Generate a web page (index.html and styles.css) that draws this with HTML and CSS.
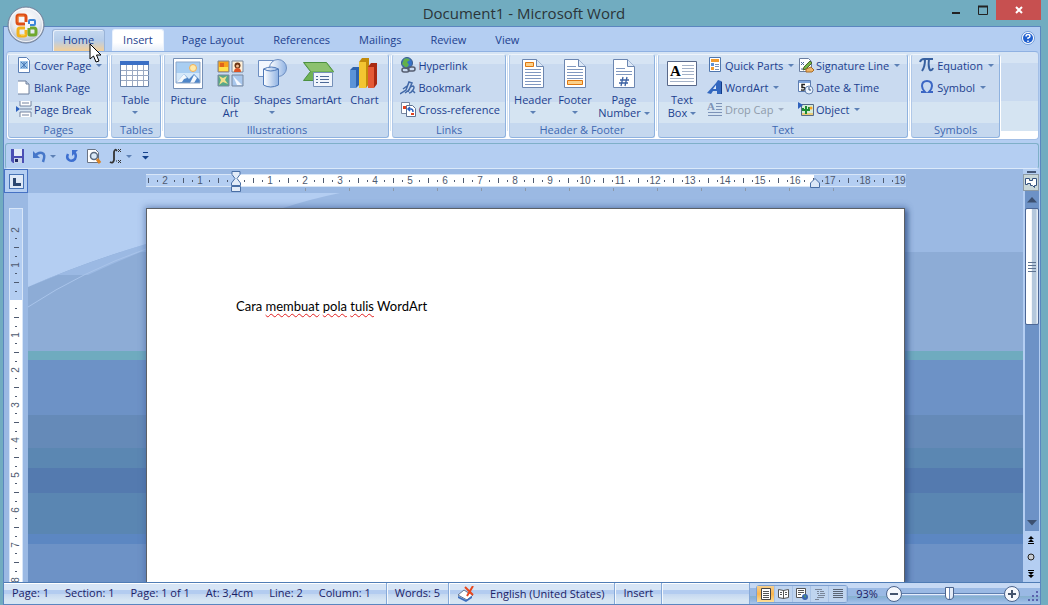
FILE: index.html
```html
<!DOCTYPE html>
<html lang="en">
<head>
    <meta charset="UTF-8">
    <meta name="viewport" content="width=device-width, initial-scale=1.0">
    <title>Document1 - Microsoft Word</title>
    <link rel="stylesheet" href="styles.css">
</head>
<body>

    <header class="titlebar">
        <h1>Document1 - Microsoft Word</h1>
        <div class="window-buttons">
            <button class="win-btn" aria-label="Minimize"><svg width="10" height="10"><path d="M1 8h8" stroke="#222" stroke-width="2"/></svg></button>
            <button class="win-btn" aria-label="Maximize"><svg width="10" height="10"><path d="M.5 1v8.500h9V1" fill="none" stroke="#222"/><path d="M0 1.500h10" stroke="#222" stroke-width="2"/></svg></button>
            <button class="win-btn close" aria-label="Close"><svg width="8" height="8"><path d="M1 1l6 6M7 1l-6 6" stroke="#fff" stroke-width="2"/></svg></button>
        </div>
    </header>

    <button class="orb" aria-label="Office Button">
        <svg width="38" height="38" viewBox="0 0 38 38">
            <defs><radialGradient id="orbFill" cx=".5" cy=".35" r=".65"><stop offset="0" stop-color="#fff"/><stop offset=".6" stop-color="#e6eaf1"/><stop offset="1" stop-color="#a9b4c6"/></radialGradient></defs>
            <circle cx="19" cy="19" r="18" fill="url(#orbFill)" stroke="#71809a"/>
            <circle cx="19" cy="19" r="16.500" fill="none" stroke="#fff" opacity=".8"/>
            <g fill="none" stroke-linejoin="round">
                <path d="M18 18h-6q-2 0-2-2v-5q0-2 2-2h5q2 0 2 2v5" stroke="#dd4f17" stroke-width="3"/>
                <path d="M11 16v-5q0-1 1-1h5" stroke="#f58a3c"/>
                <path d="M22 18v-3q0-1 1-1h4q1 0 1 1v3q0 1-1 1h-4" stroke="#3d86d8" stroke-width="2"/>
                <path d="M18 22h-5q-2 0-2 2v4q0 2 2 2h4q2 0 2-2v-4" stroke="#f3b21b" stroke-width="3"/>
                <path d="M14 29h3q1 0 1-1" stroke="#ffdf6a"/>
                <path d="M22 22v6q0 1 1 1h4q2 0 2-2v-3q0-2-2-2h-4" stroke="#6fa82e" stroke-width="3"/>
            </g>
        </svg>
    </button>

    <div class="app">
        <nav class="tabs">
            <button class="tab hover">Home</button>
            <button class="tab active">Insert</button>
            <button class="tab">Page Layout</button>
            <button class="tab">References</button>
            <button class="tab">Mailings</button>
            <button class="tab">Review</button>
            <button class="tab">View</button>
            <button class="help" aria-label="Help"><svg width="14" height="14"><circle cx="7" cy="7" r="6.500" fill="#fff" stroke="#6f9bd8"/><circle cx="7" cy="7" r="5" fill="#1f5fcf"/><path d="M5 5.500q0-2 2-2t2 1.700q0 1.300-2 1.800v1M7 9.500v1.500" fill="none" stroke="#fff" stroke-width="1.500"/></svg></button>
        </nav>

        <div class="ribbon">
            <section class="group">
                <div class="group-body">
                    <div class="small-list pad-pages">
                        <button class="small"><svg width="16" height="16"><path d="M2.500.5h8l3 3v12h-11z" fill="#fff" stroke="#5b7fb5"/><path d="M4 4h8v8H4z" fill="#9cc4ea"/><path d="M5 5l6 6M11 5l-6 6M8 5v6" stroke="#4a7bb8"/></svg>Cover Page<i class="arrow"></i></button>
                        <button class="small"><svg width="16" height="16"><path d="M2 2h8l3 3v10H2z" fill="#fff"/><path d="M2 2h8l3 3v10H2" fill="none" stroke="#6c7f9c"/><path d="M10 2v3h3" fill="#c6d5ea" stroke="#6c7f9c"/></svg>Blank Page</button>
                        <button class="small"><svg width="16" height="16"><path d="M0 5l4 3-4 3z" fill="#2f62bd"/><path d="M4 0h11v5H4zM4 11h11v5H4z" fill="#fff"/><path d="M4 0v5h11V0M4 16v-5h11v5M6 2h7M6 14h7M4 8h12" fill="none" stroke="#7283a0"/></svg>Page Break</button>
                    </div>
                </div>
                <h2>Pages</h2>
            </section>

            <section class="group">
                <div class="group-body">
                    <div class="big-list big-table">
                        <button class="big"><svg width="32" height="32"><path d="M1.500 3.500h28v25h-28z" fill="#fff" stroke="#6a84ab"/><path d="M1 3h29v4H1z" fill="#3a6fc5"/><path d="M2 12.500h28M2 17.500h28M2 22.500h28M7.500 7v21M13.500 7v21M18.500 7v21M24.500 7v21" stroke="#9aa9c2"/></svg>Table<i class="arrow"></i></button>
                    </div>
                </div>
                <h2>Tables</h2>
            </section>

            <section class="group">
                <div class="group-body">
                    <div class="big-list big-illustrations">
                        <button class="big"><svg width="32" height="32"><path d="M1.500.5h29v30h-29z" fill="#fff" stroke="#7690b6"/><path d="M4 4h24v21H4z" fill="#a9cef2"/><path d="M4 15h24v8H4z" fill="#d4e8fa"/><circle cx="21" cy="10" r="3.500" fill="#ffe9a8" stroke="#eeb05a"/><path d="M4 25l8-9 5 5 5-5 6 6v3z" fill="#4f86c8"/><path d="M4 25l8-9 3 4-3 1-2 3zM18 25l4-8 3 3-3 5z" fill="#f3f8fd"/><path d="M4 4h24v21H4z" fill="none" stroke="#8da7ca"/></svg>Picture</button>
                        <button class="big"><svg width="32" height="32"><path d="M4 3h11v11H4z" fill="#f7a11b" stroke="#78879d"/><path d="M5 9h9v4H5z" fill="#ffe14a"/><path d="M6 5h4v4H6z" fill="#e0641a"/><path d="M18 3h11v11H18z" fill="#fff0d8" stroke="#78879d"/><circle cx="23.500" cy="7.500" r="3" fill="#6b3312"/><circle cx="23.500" cy="8" r="1.500" fill="#f1b98d"/><path d="M20 14q0-4 3.500-4t3.500 4z" fill="#dd5426"/><path d="M4 17h11v11H4z" fill="#58a988" stroke="#78879d"/><path d="M5 18l4 2 4-2-2 4 3 4-5-2-4 3 2-5z" fill="#f1e08a"/><path d="M18 17h11v11H18z" fill="#a9c7ed" stroke="#78879d"/><path d="M19 18l9 9h-5z" fill="#f4f8fe"/></svg>Clip<br>Art</button>
                        <button class="big"><svg width="32" height="32"><defs><linearGradient id="shapeFill"><stop offset="0" stop-color="#fff"/><stop offset="1" stop-color="#8fb2e3"/></linearGradient></defs><path d="M2.500 2.500h17v16h-17z" fill="#f2f7fe" stroke="#6e8fc2"/><circle cx="22" cy="10" r="8.500" fill="url(#shapeFill)" stroke="#6e8fc2"/><path d="M7.500 11v16q7 4 15 0V11q-7-4-15 0q7 4 15 0" fill="url(#shapeFill)" stroke="#4f79b8"/></svg>Shapes<i class="arrow"></i></button>
                        <button class="big"><svg width="32" height="32"><path d="M1.500 4.500h23l7 9-7 9h-23l7-9z" fill="#6fb255" stroke="#4b9040"/><path d="M3 5h21l6 8H9z" fill="#8cc16f"/><path d="M11.500 14.500h19v14h-19z" fill="#f0f5fc" stroke="#7590b8"/><path d="M14 18.500h2M14 21.500h2M14 24.500h2M18 18.500h9M18 21.500h9M18 24.500h9" stroke="#4c6997"/></svg>SmartArt</button>
                        <button class="big"><svg width="32" height="32"><path d="M2 12l3-3h6v18l-3 3H2z" fill="#2e62ad"/><path d="M2 12h6v18H2z" fill="#5b93d8"/><path d="M11 4l3-4h7v26l-3 4h-7z" fill="#c38b0b"/><path d="M11 4h7v26h-7z" fill="#f3c531"/><path d="M20 9l3-4h6v21l-3 4h-6z" fill="#a92a12"/><path d="M20 9h6v21h-6z" fill="#e55a35"/></svg>Chart</button>
                    </div>
                </div>
                <h2>Illustrations</h2>
            </section>

            <section class="group">
                <div class="group-body">
                    <div class="small-list pad-links">
                        <button class="small"><svg width="16" height="16"><circle cx="7" cy="6" r="5.500" fill="#3571c8" stroke="#3a5c8c"/><path d="M4 2q4-2 6 1l-3 2 2 3-3 3-4-4z" fill="#63b04a"/><rect x="2" y="11" width="7" height="4" rx="2" fill="none" stroke="#555e70" stroke-width="1.500"/><rect x="8" y="10" width="7" height="4" rx="2" fill="none" stroke="#555e70" stroke-width="1.500"/></svg>Hyperlink</button>
                        <button class="small"><svg width="16" height="16"><path d="M0 15l6-4 3-8 3 1-3 7-4 3M3 10l4-3M8 13q2-6 5-6 2 1 0 4-2 3-4 3M13 12l2 2" fill="none" stroke="#4269a8" stroke-width="1.500"/></svg>Bookmark</button>
                        <button class="small"><svg width="16" height="16"><path d="M1.500 1.500h8v11h-8z" fill="#fff" stroke="#7786a0"/><path d="M3 5h3v3H3z" fill="#e3421e"/><path d="M6.500 4.500h6l3 3v8h-9z" fill="#fff" stroke="#5f7292"/><path d="M8 8h3q2 0 2 3M10 6L8 8l2 2" fill="none" stroke="#2e5fbb" stroke-width="1.500"/><path d="M11 12h3v2h-3z" fill="#e3421e"/></svg>Cross-reference</button>
                    </div>
                </div>
                <h2>Links</h2>
            </section>

            <section class="group">
                <div class="group-body">
                    <div class="big-list big-header">
                        <button class="big"><svg width="32" height="32"><path d="M5.500 1.500h14l7 7v21h-21z" fill="#fff" stroke="#6c86b0"/><path d="M19.500 1.500v7h7" fill="#dce8f7" stroke="#6c86b0"/><path d="M8 11.500h16M8 14.500h16M8 17.500h16M8 20.500h16M8 23.500h16M8 26.500h16" stroke="#8098c0"/><path d="M8.500 4.500h8v4h-8z" fill="#fbd08a" stroke="#e0770f"/></svg>Header<i class="arrow"></i></button>
                        <button class="big"><svg width="32" height="32"><path d="M5.500 1.500h14l7 7v21h-21z" fill="#fff" stroke="#6c86b0"/><path d="M19.500 1.500v7h7" fill="#dce8f7" stroke="#6c86b0"/><path d="M8 8.500h9M8 11.500h16M8 14.500h16M8 17.500h16M8 20.500h16" stroke="#8098c0"/><path d="M8.500 22.500h15v4h-15z" fill="#fbd08a" stroke="#e0770f"/></svg>Footer<i class="arrow"></i></button>
                        <button class="big"><svg width="32" height="32"><path d="M5.500 1.500h14l7 7v21h-21z" fill="#fff" stroke="#6c86b0"/><path d="M19.500 1.500v7h7" fill="#dce8f7" stroke="#6c86b0"/><path d="M8 10.500h9M8 13.500h16M8 16.500h16" stroke="#8098c0"/><path d="M15 19l-2 9M19 19l-2 9M12 22h9M11 25h9" stroke="#3c62a4" stroke-width="1.300"/></svg>Page<span>Number<i class="arrow"></i></span></button>
                    </div>
                </div>
                <h2>Header &amp; Footer</h2>
            </section>

            <section class="group">
                <div class="group-body">
                    <div class="big-list big-text">
                        <button class="big"><svg width="32" height="32"><path d="M1.500 3.500h29v24h-29z" fill="#fff" stroke="#59698a"/><text x="4" y="18" class="serif-a" font-size="15">A</text><path d="M16 7.500h12M16 10.500h12M16 13.500h12M16 16.500h12M4 20.500h24M4 23.500h24" stroke="#a4b2c8"/></svg>Text<span>Box<i class="arrow"></i></span></button>
                    </div>
                    <div class="small-list pad-quick">
                        <button class="small"><svg width="16" height="16"><path d="M2.500.5h11v14h-11z" fill="#fff" stroke="#4f76ad"/><path d="M4 2h8v3H4z" fill="#f29b2e"/><path d="M4 6h3v3H4z" fill="#5d8fd3"/><path d="M8 7.500h4M8 9.500h4M8 12.500h4" stroke="#7f93b5"/><path d="M4 10h3v3H4z" fill="#f29b2e"/></svg>Quick Parts<i class="arrow"></i></button>
                        <button class="small"><svg width="16" height="16"><path d="M0 14l9-10 2-3 3 1v13h-4v-3H6l-2 3z" fill="#3267bf"/><path d="M9 6v4H6z" fill="#dce9fb"/><path d="M14 2l1 1v12h-1z" fill="#123a86"/></svg>WordArt<i class="arrow"></i></button>
                        <button class="small" disabled><svg width="16" height="16"><text x="0" y="9" class="serif-a grey" font-size="11">A</text><path d="M9 2.500h6M9 5.500h6M9 8.500h6M1 11.500h14M1 14.500h14" stroke="#7d93b8"/></svg>Drop Cap<i class="arrow"></i></button>
                    </div>
                    <div class="small-list">
                        <button class="small"><svg width="16" height="16"><path d="M1.500 1.500h9l3 3v10h-12z" fill="#fff" stroke="#697da0"/><path d="M3 5l3 3M6 5L3 8M3 12h6" stroke="#4b6797"/><path d="M6 10l6-6 2 2-6 6-3 1z" fill="#77b648" stroke="#4b642c"/><path d="M8 12l5-2 3 3-2 2H8z" fill="#eeb568" stroke="#a66b27"/></svg>Signature Line<i class="arrow"></i></button>
                        <button class="small"><svg width="16" height="16"><path d="M.5 1.500h12v11H.5z" fill="#fff" stroke="#5d7db1"/><path d="M1 2h11v2H1z" fill="#7fa5dc"/><path d="M7 5.500H4v3h2q1 0 1 1.500T3 11" fill="none" stroke="#222" stroke-width="1.500"/><circle cx="11" cy="11" r="4" fill="#e8f1fc" stroke="#6482af"/><path d="M11 8v3h2" fill="none" stroke="#35507f"/></svg>Date &amp; Time</button>
                        <button class="small"><svg width="16" height="16"><path d="M3.500 3.500h12v11h-12z" fill="#d6ecd8" stroke="#556a88"/><path d="M0 1l5 3-5 4z" fill="#2f62bd"/><path d="M4 12h11v2H4z" fill="#e8ca78"/><path d="M8 5v8M5 7v2h6V6" fill="none" stroke="#1d8a31" stroke-width="2"/><circle cx="13" cy="7" r="1.500" fill="#f5a623"/></svg>Object<i class="arrow"></i></button>
                    </div>
                </div>
                <h2>Text</h2>
            </section>

            <section class="group">
                <div class="group-body">
                    <div class="small-list pad-links">
                        <button class="small"><svg width="16" height="16"><path d="M1 5q1-3 4-3h9M6 2q0 8-3 12M10 2q-1 8 1 11 2 1 3-2" fill="none" stroke="#37609f" stroke-width="2"/></svg>Equation<i class="arrow"></i></button>
                        <button class="small"><svg width="16" height="16"><path d="M2 13h4q-3-3-3-6 0-5 5-5t5 5q0 3-3 6h4" fill="none" stroke="#3b66c4" stroke-width="2"/></svg>Symbol<i class="arrow"></i></button>
                    </div>
                </div>
                <h2>Symbols</h2>
            </section>
        </div>

        <div class="quickbar">
            <button aria-label="Save"><svg width="16" height="16"><path d="M1 1h13v14H3l-2-2z" fill="#4a4fb4"/><path d="M4 1h8v7H4z" fill="#e4ebf8"/><path d="M4 10h8v5H4z" fill="#c9d4ea"/><path d="M5 11h3v3H5z" fill="#222a66"/></svg></button>
            <button aria-label="Undo"><svg width="16" height="16"><path d="M3 8q3-4 7-3t1 9" fill="none" stroke="#4677c9" stroke-width="2.500"/><path d="M1 3v7h7z" fill="#4677c9"/></svg></button>
            <button class="drop" aria-label="Undo list"><i class="arrow"></i></button>
            <button aria-label="Repeat"><svg width="16" height="16"><path d="M4 6q-2 4 1 6 3 2 6-1 2-4-1-7" fill="none" stroke="#3d6fd0" stroke-width="2.500"/><path d="M8 2h6l-6 6z" fill="#3d6fd0"/></svg></button>
            <button aria-label="Print Preview"><svg width="16" height="16"><path d="M1.500 1.500h8l3 3v10h-11z" fill="#fff" stroke="#6b7484"/><circle cx="8" cy="8" r="3.500" fill="#dbeaf8" stroke="#5b6b80" stroke-width="1.500"/><path d="M11 11l3 4" stroke="#d98326" stroke-width="3"/></svg></button>
            <button aria-label="Equation"><svg width="16" height="16"><path d="M9 3Q7 0 6 4v8q-1 4-4 2" fill="none" stroke="#333" stroke-width="1.800"/><path d="M10 1l3 3M13 1l-3 3M10 12l3 3M13 12l-3 3M8 13h1" stroke="#333"/></svg></button>
            <button class="drop" aria-label="Equation list"><i class="arrow"></i></button>
            <button class="drop" aria-label="Customize Quick Access Toolbar"><svg width="7" height="8"><path d="M1 .5h5" stroke="#15428b"/><path d="M0 4h7L3.500 7.500z" fill="#15428b"/></svg></button>
        </div>

        <div class="editor">
            <div class="tab-corner"><button class="tab-kind" aria-label="Left Tab"><svg width="8" height="8"><path d="M1.500 0v6.500H8" fill="none" stroke="#2c4770" stroke-width="3"/></svg></button></div>

            <div class="ruler-row">
                <div class="ruler">
                    <div class="cm">2</div><div class="cm">1</div><div class="cm"></div><div class="cm">1</div><div class="cm">2</div><div class="cm">3</div><div class="cm">4</div><div class="cm">5</div><div class="cm">6</div><div class="cm">7</div><div class="cm">8</div><div class="cm">9</div><div class="cm">10</div><div class="cm">11</div><div class="cm">12</div><div class="cm">13</div><div class="cm">14</div><div class="cm">15</div><div class="cm">16</div><div class="cm">17</div><div class="cm">18</div><div class="cm">19</div>
                </div>
                <svg class="indent left" width="10" height="22"><path d="M1 .5h8v3L6 7.500 9.500 12v2.500H.5V12L4 7.500 1 3.500z" fill="#e3ecf8" stroke="#4a6fa5"/><path d="M.5 15.500h9v5h-9z" fill="#e3ecf8" stroke="#4a6fa5"/></svg>
                <svg class="indent right" width="10" height="10"><path d="M.5 9.500V5L5 .5 9.500 5v4.500z" fill="#dbe7f7" stroke="#4a6fa5"/></svg>
            </div>

            <div class="v-ruler-col">
                <div class="v-ruler">
                    <div class="vcm first"><span>2</span></div><div class="vcm"><span>1</span></div><div class="vcm"></div><div class="vcm"><span>1</span></div><div class="vcm"><span>2</span></div><div class="vcm"><span>3</span></div><div class="vcm"><span>4</span></div><div class="vcm"><span>5</span></div><div class="vcm"><span>6</span></div><div class="vcm"><span>7</span></div><div class="vcm"><span>8</span></div>
                </div>
            </div>

            <main class="workspace">
                <svg class="swoosh" width="480" height="120"><path d="M0 0h312q-30 6-60 16L115 52Q55 70 0 94z" fill="#b4cef2"/><path d="M0 94Q55 70 115 52l3-1v6Q90 68 60 82H30L0 94z" fill="#9bb9e3"/><path d="M0 114Q55 78 118 56" fill="none" stroke="#a9c4ea"/></svg>
                <article class="page">
                    <p>Cara <u>membuat</u> <u>pola</u> <u>tulis</u> WordArt</p>
                </article>
            </main>

            <aside class="scrollbar">
                <div class="split"></div>
                <button class="ruler-toggle" aria-label="View Ruler"><svg width="14" height="13"><path d="M1.500 2.500h4v2h3v-2h4v7h-2v2l-2-2h-2v-2h-3v1h-2z" fill="#fff" stroke="#34517f"/></svg></button>
                <div class="track">
                    <button class="step" aria-label="Scroll up"><svg width="10" height="6"><path d="M0 5.500L5 0l5 5.500z" fill="#3c5070"/></svg></button>
                    <div class="thumb"></div>
                    <button class="step last" aria-label="Scroll down"><svg width="10" height="6"><path d="M0 0l5 5.500L10 0z" fill="#3c5070"/></svg></button>
                </div>
                <button class="browse" aria-label="Previous Page"><svg width="8" height="8"><path d="M4 0l3 3H1zM4 3l3 3H1zM1 7h6v1H1z"/></svg></button>
                <button class="browse" aria-label="Select Browse Object"><svg width="8" height="8"><circle cx="4" cy="4" r="3" fill="#c9cdd2" stroke="#222"/></svg></button>
                <button class="browse" aria-label="Next Page"><svg width="8" height="8"><path d="M1 0h6v1H1zM1 2h6L4 5zM1 5h6L4 8z"/></svg></button>
            </aside>
        </div>

        <footer class="status">
            <div class="cell cell-pos"><span>Page: 1</span><span>Section: 1</span><span>Page: 1 of 1</span><span>At: 3,4cm</span><span>Line: 2</span><span>Column: 1</span></div>
            <div class="cell">Words: 5</div>
            <div class="cell cell-lang"><svg width="18" height="16"><path d="M1 9l6-5 3 2 6 3-6 5z" fill="#fff" stroke="#66758e"/><path d="M1 10l8 4 6-4v2l-6 4-8-4z" fill="#3e6fbe"/><path d="M8 1l8 8M16 0l-6 10" stroke="#e8481e" stroke-width="2"/></svg>English (United States)</div>
            <div class="cell">Insert</div>
            <div class="cell spacer"></div>
            <div class="status-right">
                <div class="views">
                    <button class="on" aria-label="Print Layout"><svg width="12" height="12"><path d="M1.500.5h9v11h-9z" fill="#fff" stroke="#444"/><path d="M3 3.500h6M3 5.500h6M3 7.500h6M3 9.500h6" stroke="#555"/></svg></button>
                    <button aria-label="Full Screen Reading"><svg width="12" height="12"><path d="M.5 1.500l5 1 5-1v8l-5 1-5-1z" fill="#fff" stroke="#555"/><path d="M5.500 2v9M2 4.500h2M2 6.500h2M7 4.500h2M7 6.500h2" stroke="#555"/></svg></button>
                    <button aria-label="Web Layout"><svg width="12" height="12"><path d="M.5.5h9v9h-9z" fill="#fff" stroke="#555"/><path d="M2 2.500h6M2 4.500h6M2 6.500h3" stroke="#555"/><circle cx="9" cy="9" r="3" fill="#3a66b0"/><path d="M8 7l2 1-1 2z" fill="#5fae4c"/></svg></button>
                    <button aria-label="Outline"><svg width="12" height="12"><path d="M1 1.500h7M3 3.500h2M6 3.500h4M3 5.500h2M6 5.500h5M4 7.500h7M3 9.500h7M1 11.500h4" stroke="#7a8699"/></svg></button>
                    <button aria-label="Draft"><svg width="12" height="12"><path d="M1 1.500h10M1 3.500h10M1 5.500h10M1 7.500h10M1 9.500h10" stroke="#5a6474"/></svg></button>
                </div>
                <button class="zoom-value">93%</button>
                <button class="zoom-btn" aria-label="Zoom Out"><svg width="16" height="16"><circle cx="8" cy="8" r="7.500" fill="#f4f7fc" stroke="#4c648c"/><path d="M4 8h8" stroke="#44546e" stroke-width="2"/></svg></button>
                <input class="zoom" type="range" min="0" max="100" value="46" aria-label="Zoom">
                <button class="zoom-btn" aria-label="Zoom In"><svg width="16" height="16"><circle cx="8" cy="8" r="7.500" fill="#f4f7fc" stroke="#4c648c"/><path d="M4 8h8M8 4v8" stroke="#44546e" stroke-width="2"/></svg></button>
                <svg class="grip" width="12" height="12"><path d="M8 0h2v2H8zM8 4h2v2H8zM4 4h2v2H4zM8 8h2v2H8zM4 8h2v2H4zM0 8h2v2H0z" fill="#5a63ad"/></svg>
            </div>
        </footer>
    </div>

    <svg class="cursor" width="14" height="21"><path d="M1 1v15l3.500-3L7 19l3-1-2.500-6H12z" fill="#fff" stroke="#000"/></svg>

</body>
</html>
```
FILE: styles.css
```css
* {
    box-sizing: border-box;
}
body {
    margin: 0;
    height: 100vh;
    min-width: 1040px;
    display: flex;
    flex-direction: column;
    background: #71acc0;
    color: #1c3f8f;
    font-family: "Open Sans", "Noto Sans", sans-serif;
    font-size: 11px;
    line-height: 13px;
    overflow: hidden;
}
button {
    font: inherit;
    color: inherit;
    background: none;
    border: none;
    padding: 0;
    margin: 0;
}
svg {
    display: block;
    flex: none;
}

/* title bar */
.titlebar {
    height: 26px;
    display: grid;
    grid-template-columns: 1fr auto 1fr;
    padding: 0 7px;
    flex: none;
}
.titlebar h1 {
    grid-column: 2;
    margin: 0;
    font-size: 15px;
    font-weight: normal;
    line-height: 27px;
    color: #2b3438;
}
.window-buttons {
    display: flex;
    justify-content: flex-end;
    height: 20px;
}
.win-btn {
    width: 27px;
    display: flex;
    align-items: center;
    justify-content: center;
}
.win-btn.close {
    width: 45px;
    background: #c75050;
}
.orb {
    position: absolute;
    left: 7px;
    top: 6px;
    z-index: 2;
}
.cursor {
    position: absolute;
    left: 89px;
    top: 43px;
    z-index: 3;
}

.app {
    flex: 1;
    min-height: 0;
    display: flex;
    flex-direction: column;
    margin: 0 7px 0 3px;
    border: 1px solid #5b86bf;
    background: #b4cef2;
}

/* tabs */
.tabs {
    display: flex;
    gap: 7px;
    height: 24px;
    padding: 2px 5px 0 48px;
    flex: none;
}
.tab {
    padding: 0 10px 2px;
    border: 1px solid transparent;
    border-bottom: none;
    border-radius: 3px 3px 0 0;
}
.tab.hover {
    border-color: #9ab4d8;
    background: linear-gradient(#c6d9f0, #b7cde9 50%, #e3cfb0 85%, #f3cf98);
    box-shadow: inset 1px 1px #e8effa;
}
.tab.active {
    background: linear-gradient(#fff 60%, #e6eef9);
    border-color: #e9f1fc;
}
.help {
    margin-left: auto;
    align-self: flex-start;
    padding-top: 2px;
}

/* ribbon */
.ribbon {
    display: flex;
    gap: 3px;
    flex: none;
    margin: 0 1px 0 2px;
    padding: 2px 1px 1px;
    height: 89px;
    border: 1px solid #a3bfe6;
    border-top-color: #8fb1e2;
    border-radius: 4px;
    background: linear-gradient(#d6e4f4 11px, #c9daf0 11px, #c9daf0 49px, #d5e4f2 49px, #d5e4f2 79px, #fff 79px);
}
.group {
    display: flex;
    flex-direction: column;
    border: 1px solid #8fb2df;
    border-top-color: #eef4fb;
    border-left-color: #b0c8e8;
    border-radius: 3px;
    background: linear-gradient(#d6e4f4 9px, #c9daf0 9px, #c9daf0 47px, #d5e4f2 47px, #d5e4f2 68px, #c5d8ef 68px);
    box-shadow: 1px 1px #fff, -1px 0 #fff;
}
.group-body {
    display: flex;
    height: 67px;
}
.group h2 {
    margin: 0;
    padding-top: 1px;
    font-size: 11px;
    font-weight: normal;
    line-height: 15px;
    text-align: center;
    color: #3f68b1;
}
.small-list {
    display: grid;
    grid-template-rows: repeat(3, 22px);
    justify-items: start;
    padding-right: 7px;
}
.pad-pages {
    padding-left: 7px;
    padding-right: 5px;
}
.pad-links {
    padding-left: 7px;
    padding-right: 5px;
}
.pad-quick {
    width: 93px;
    padding: 0 0 0 2px;
}
.small {
    display: flex;
    align-items: center;
    gap: 2px;
    padding-bottom: 2px;
    white-space: nowrap;
}
.small:disabled {
    color: #8f9bab;
}
.arrow {
    display: inline-block;
    flex: none;
    border: 3px solid transparent;
    border-top-color: #5c80b5;
    border-bottom: none;
}
.small .arrow {
    margin-left: 3px;
}
.small:disabled .arrow {
    border-top-color: #9fadc3;
}
.big-list {
    display: grid;
}
.big-table {
    grid-template-columns: 46px;
    padding-right: 2px;
}
.big-illustrations {
    grid-template-columns: 42px 42px 42px 50px 42px;
    padding: 0 3px 0 2px;
}
.big-header {
    grid-template-columns: 42px 42px 56px;
    padding: 0 2px;
}
.big-text {
    grid-template-columns: 46px;
}
.big {
    display: flex;
    flex-direction: column;
    align-items: center;
    padding-top: 3px;
}
.big svg {
    margin-bottom: 3px;
}
.big > .arrow {
    margin-top: 5px;
}
.big span .arrow {
    margin-left: 3px;
    vertical-align: 2px;
}
.serif-a {
    font-family: "Liberation Serif", serif;
    font-weight: bold;
}
.grey {
    fill: #7d93b8;
}

/* quick access toolbar */
.quickbar {
    display: flex;
    align-items: center;
    gap: 6px;
    flex: none;
    height: 26px;
    margin: 3px 1px 0;
    padding-left: 4px;
    border: 1px solid #7fb0c8;
    border-bottom-color: #dbe9fa;
    border-radius: 3px;
    background: #b4cef2;
}
.drop {
    width: 10px;
    margin-left: -6px;
    display: flex;
    justify-content: center;
}
.drop:last-child {
    margin-left: 0;
}

/* editor */
.editor {
    flex: 1;
    min-height: 0;
    display: grid;
    grid-template-columns: 24px 1fr 17px;
    grid-template-rows: 24px 1fr;
    background: #9bb9e3;
}
.tab-corner {
    display: flex;
    align-items: center;
    justify-content: center;
    border: 1px solid #4672c4;
    background: #b4cef2;
}
.tab-kind {
    width: 15px;
    height: 15px;
    padding: 3px;
    border: 1px solid #4672b4;
    background: #dfe9f7;
}
.ruler-row {
    position: relative;
    display: flex;
    justify-content: center;
    padding-top: 5px;
    background: repeating-linear-gradient(90deg, transparent 0 43px, #8c98a8 43px 44px) calc(50% + 22px) 19px / 572px 3px no-repeat;
}
.ruler {
    display: flex;
    width: 760px;
    height: 13px;
    padding-left: 2px;
    overflow: hidden;
    border: solid #d8e6f8;
    border-width: 1px 0;
    background: linear-gradient(90deg, #b4cef2 90px, #fff 90px, #fff 668px, #b4cef2 668px);
}
/* one centimetre: half mark on the edge, quarter dots inside */
.cm {
    flex: 0 0 35px;
    font-family: "Liberation Sans", sans-serif;
    font-size: 10px;
    line-height: 12px;
    text-align: center;
    color: #4e5a70;
    background:
        linear-gradient(#4e5a70, #4e5a70) 0 3px / 1px 5px no-repeat,
        linear-gradient(#4e5a70, #4e5a70) 9px 5px / 1px 2px no-repeat,
        linear-gradient(#4e5a70, #4e5a70) 26px 5px / 1px 2px no-repeat;
}
.indent {
    position: absolute;
}
.indent.left {
    left: calc(50% - 295px);
    top: 2px;
}
.indent.right {
    left: calc(50% + 284px);
    top: 9px;
}
.v-ruler-col {
    grid-row: 2;
    display: flex;
    justify-content: center;
    min-height: 0;
    padding-top: 15px;
}
.v-ruler {
    width: 14px;
    padding-top: 3px;
    overflow: hidden;
    border: 1px solid #d8e6f8;
    border-bottom: none;
    background: linear-gradient(#b4cef2 91px, #fff 91px);
}
.vcm {
    height: 35px;
    display: flex;
    align-items: center;
    justify-content: center;
    font-family: "Liberation Sans", sans-serif;
    font-size: 10px;
    line-height: 12px;
    color: #4e5a70;
    background:
        linear-gradient(#4e5a70, #4e5a70) 4px 0 / 5px 1px no-repeat,
        linear-gradient(#4e5a70, #4e5a70) 5px 9px / 2px 1px no-repeat,
        linear-gradient(#4e5a70, #4e5a70) 5px 26px / 2px 1px no-repeat;
}
.vcm.first {
    background: linear-gradient(#4e5a70, #4e5a70) 5px 26px / 2px 1px no-repeat;
}
.vcm span {
    transform: rotate(-90deg);
}
.workspace {
    grid-area: 2 / 2;
    position: relative;
    display: flex;
    justify-content: center;
    min-height: 0;
    padding-top: 15px;
    overflow: hidden;
    background: linear-gradient(#9bb9e3 59px, #8dacd6 59px, #8dacd6 158px, #6fabbf 158px, #6fabbf 167px, #6d92c6 167px, #6d92c6 222px, #658ab8 222px, #658ab8 255px, #5b87b2 255px, #5b87b2 275px, #547aaf 275px, #547aaf 300px, #5a86b2 300px, #5a86b2 341px, #5c87c2 341px, #5c87c2 351px, #6d92c6 351px);
}
.swoosh {
    position: absolute;
    left: 0;
    top: 0;
}
.page {
    position: relative;
    width: 759px;
    padding: 89px;
    border: 1px solid #5c6066;
    border-bottom: none;
    background: #fff;
    box-shadow: 3px 2px 5px rgba(40, 70, 125, .6), 0 0 6px 2px rgba(70, 105, 165, .45);
}
.page p {
    margin: 0;
    font-family: Lato, sans-serif;
    font-size: 13px;
    line-height: 16px;
    color: #000;
}
.page u {
    text-decoration: underline wavy #e02020 1px;
    text-underline-offset: 2px;
}

/* scrollbar */
.scrollbar {
    grid-area: 1 / 3 / 3 / 4;
    display: flex;
    flex-direction: column;
    min-height: 0;
    padding-right: 1px;
    background: #b4cef2;
}
.split {
    height: 2px;
    margin: 2px 3px 1px 4px;
    background: #46597a;
    flex: none;
}
.ruler-toggle {
    height: 17px;
    border: 1px solid #8c9aa5;
    background: #c9d7d9;
    display: flex;
    align-items: center;
    justify-content: center;
    flex: none;
}
.track {
    flex: 1;
    display: flex;
    flex-direction: column;
    margin-left: 2px;
    background: #6d92c6;
}
.step {
    height: 17px;
    display: flex;
    align-items: center;
    justify-content: center;
}
.step.last {
    margin-top: auto;
}
.thumb {
    height: 117px;
    border: 1px solid #4c6796;
    border-radius: 2px;
    background:
        repeating-linear-gradient(#5f7391 0 1px, transparent 1px 3px) center / 8px 10px no-repeat,
        linear-gradient(90deg, #fff 45%, #b5c8dc 50%, #b5c8dc 85%, #e5edf5 90%);
}
.browse {
    height: 17px;
    display: flex;
    align-items: center;
    justify-content: center;
    flex: none;
}

/* status bar */
.status {
    display: flex;
    flex: none;
    height: 22px;
    line-height: 20px;
    border-top: 1px solid #4f7cb5;
    color: #1a2266;
    background: linear-gradient(#fff 1px, #d7e5f6 1px, #d7e5f6 7px, #b3ccf0 7px, #b3ccf0 11px, #c5d8f0 11px, #d6e5f3 17px);
}
.cell {
    display: flex;
    padding: 0 8px;
    border-right: 1px solid #86a9d8;
    box-shadow: 1px 0 #f4f8fd;
}
.cell-pos {
    gap: 16px;
    padding-right: 15px;
}
.cell-lang {
    gap: 15px;
    align-items: center;
    padding-right: 10px;
}
.spacer {
    flex: 1;
}
.status-right {
    display: flex;
    align-items: center;
    padding-left: 6px;
    background: linear-gradient(#c6d9f4 5px, #9ab9e4 5px, #9ab9e4 13px, #86b1cc 13px, #8db2dc 16px, #a9c5ea);
}
.views {
    display: flex;
    height: 18px;
    border: 1px solid #7ea0d0;
    border-radius: 3px;
    background: #bfd4ef;
}
.views button {
    width: 18px;
    display: flex;
    align-items: center;
    justify-content: center;
    border-right: 1px solid #a8c2e5;
}
.views button.on {
    background: linear-gradient(#f5cf8f, #fbb54c 50%, #fde09a);
}
.zoom-value {
    width: 38px;
}
.zoom {
    appearance: none;
    width: 102px;
    height: 16px;
    margin: 0;
    background:
        linear-gradient(#6784b2, #6784b2) 50% 50% / 1px 8px no-repeat,
        linear-gradient(#5f7fb0 50%, #e6effb 50%) 0 50% / 100% 2px no-repeat;
}
.zoom::-webkit-slider-thumb {
    appearance: none;
    width: 9px;
    height: 13px;
    border: 1px solid #4c648c;
    border-radius: 1px 1px 5px 5px;
    background: linear-gradient(90deg, #fff 3px, #6b87b5 3px, #6b87b5 4px, #e3ebf6 4px);
}
.grip {
    margin: 6px 0 0 8px;
}
```
